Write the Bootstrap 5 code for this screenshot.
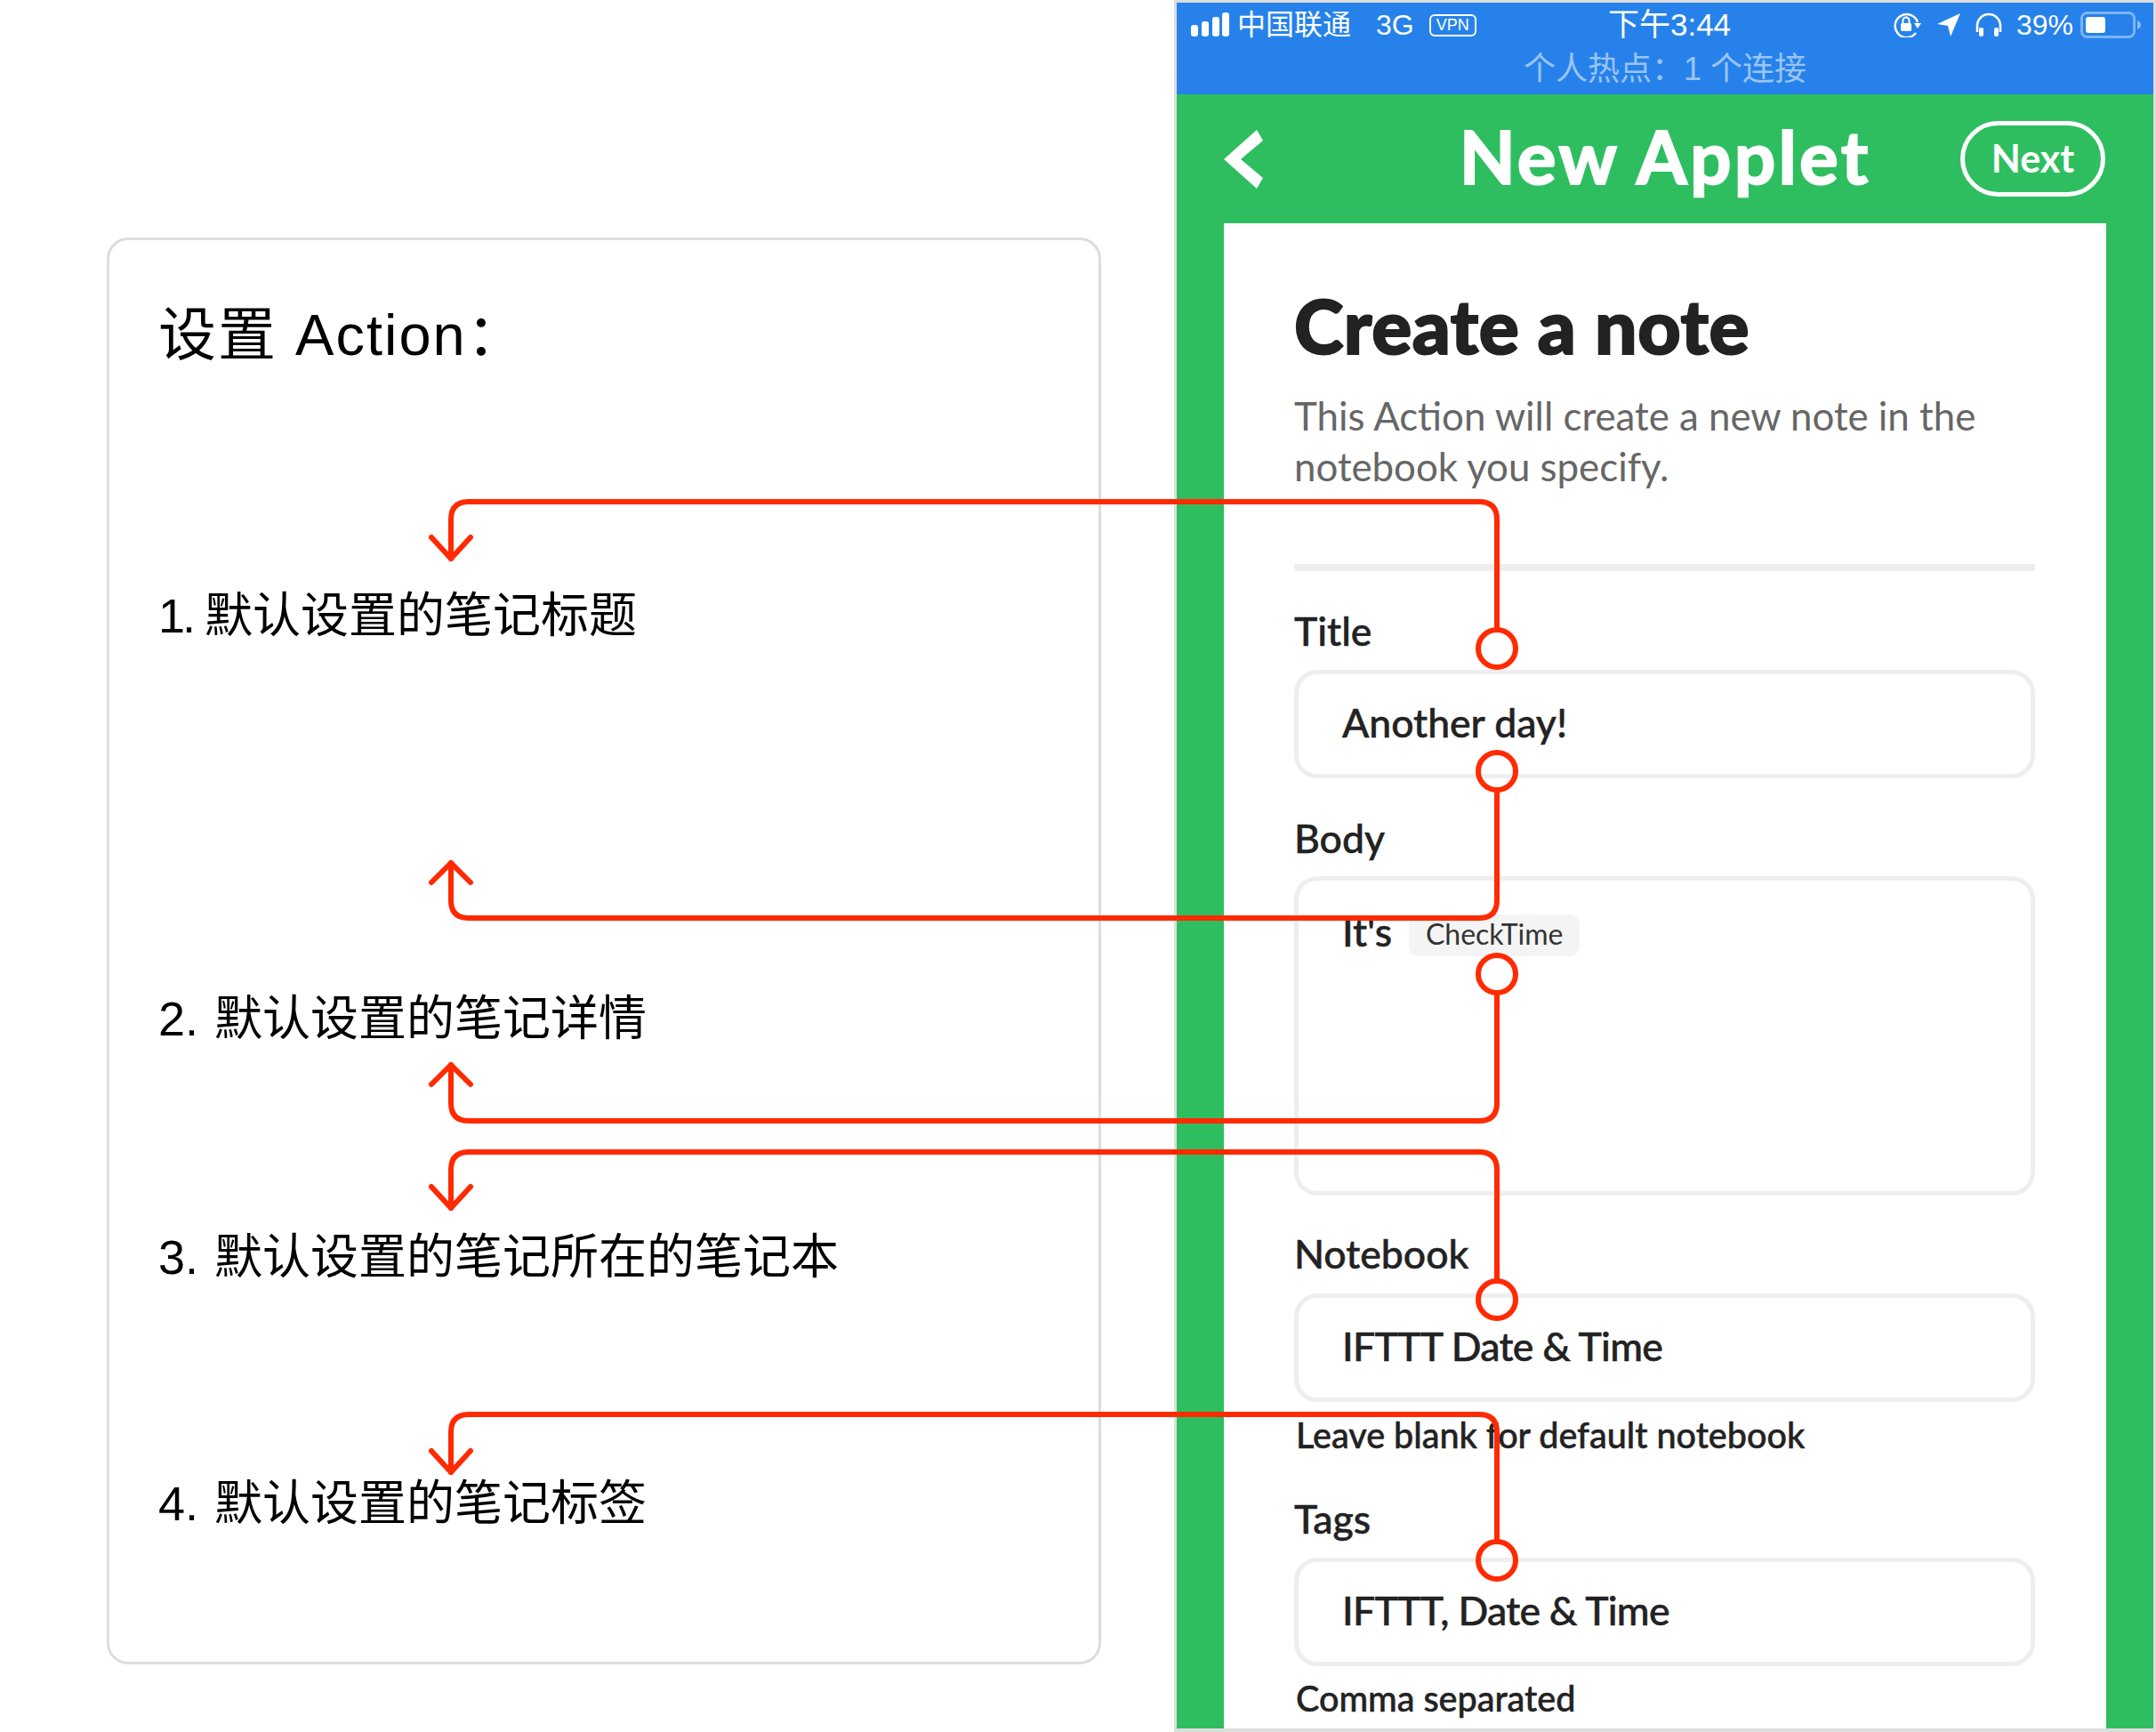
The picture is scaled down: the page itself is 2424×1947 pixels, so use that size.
<!DOCTYPE html>
<html lang="zh">
<head>
  <meta charset="utf-8">
  <title>设置 Action</title>
  <link rel="stylesheet" href="https://cdn.jsdelivr.net/npm/bootstrap@5.3.0/dist/css/bootstrap.min.css">
  <style>
    body { width: 2424px; height: 1947px; overflow: hidden; background: #fff; position: relative; }

    /* left explanation card */
    .side-wrap { width: 1320px; padding: 267px 0 0 120px; }
    .side-card { width: 1118px; height: 1604px; border: 3px solid #ddd; border-radius: 24px; padding: 67px 0 0 55px; font-family: "Liberation Sans", "Noto Sans CJK SC", sans-serif; color: #000; }
    .side-title { font-size: 65px; line-height: 80px; letter-spacing: 2px; }
    .side-row { font-size: 54px; line-height: 70px; }
    .gap-r1 { margin-top: 240px; }
    .gap-r2 { margin-top: 383px; }
    .gap-r3 { margin-top: 198px; }
    .gap-r4 { margin-top: 207px; }
    .num-one { letter-spacing: -3px; margin-right: 13px; }
    .num-rest { margin-right: 3px; }

    /* phone */
    .phone { width: 1104px; height: 1947px; border: 3px solid #ddd; border-bottom-width: 4px; background: #2ebe60; font-family: Lato, "Noto Sans", sans-serif; }
    .status { height: 103px; background: #2682ea; color: #fff; font-family: "Liberation Sans", "Noto Sans CJK SC", sans-serif; }
    .status-top { height: 50px; padding: 0 12px 0 16px; font-size: 32px; }
    .status-side { flex: 1 1 0; }
    .status-time { font-size: 35px; margin-left: 6px; }
    .hotspot { font-size: 36px; line-height: 40px; margin-top: 5px; color: rgba(255,255,255,.55); }
    .vpn-tag { font-size: 18px; line-height: 21px; height: 25px; width: 53px; border: 2px solid #fff; border-radius: 6px; margin-left: 17px; text-align: center; }
    .app-bar { height: 145px; color: #fff; padding-bottom: 6px; }
    .bar-side { flex: 1 1 0; }
    .bar-title { font-size: 82px; font-weight: 700; line-height: 1; letter-spacing: 3.2px; margin-top: -2px; -webkit-text-stroke: 2px #fff; }
    .next-btn { width: 163px; height: 85px; border: 5px solid #fff; border-radius: 43px; color: #fff; background: none; font-size: 43px; font-weight: 700; line-height: 1; margin: 6px 54px 0 0; padding: 0 0 3px; }
    .next-btn:hover { color: #fff; }
    .back-icon { margin: 6px 0 0 53px; }
    .panel { height: 1692px; margin: 0 53px; padding: 75px 80px 0 79px; background: #fff; color: #222; }
    .note-title { font-size: 84px; font-weight: 900; line-height: 80px; margin: 0; color: #222; letter-spacing: .6px; -webkit-text-stroke: 2px #222; }
    .note-desc { font-size: 43.8px; line-height: 57px; margin: 33px 0 0; color: #666; }
    .note-rule { height: 8px; background: #eee; margin-top: 81px; }
    .fld-label { font-size: 44.5px; font-weight: 500; line-height: 50px; margin-bottom: 18px; -webkit-text-stroke: .5px #222; }
    .lb-title { margin-top: 42px; margin-bottom: 19px; }
    .lb-body { margin-top: 42px; }
    .lb-book { margin-top: 40px; margin-bottom: 20px; }
    .lb-tags { margin-top: 47px; margin-bottom: 19px; }
    .fld-box { height: 122px; border: 5px solid #eee; border-radius: 26px; padding: 0 0 3px 49px; font-size: 44.5px; font-weight: 500; color: #222; -webkit-text-stroke: .5px #222; }
    .fld-body { height: 359px; padding: 35px 0 0 49px; }
    .tight-text { letter-spacing: -.7px; }
    .chip { font-size: 32px; font-weight: 400; line-height: 44px; height: 47px; width: 192px; background: #f4f4f4; border-radius: 12px; text-align: center; margin: 3px 0 0 19px; color: #333; -webkit-text-stroke: 0; }
    .its { line-height: 47px; margin-top: -2px; }
    .fld-hint { font-size: 39.5px; font-weight: 500; line-height: 44px; padding-left: 2px; -webkit-text-stroke: .5px #222; }
    .ht-book { margin-top: 15px; }
    .ht-tags { margin-top: 14px; }

    .wires { position: absolute; top: 0; left: 0; pointer-events: none; }
    .wires path, .wires circle { fill: none; stroke: #ff2a00; stroke-width: 6; stroke-linecap: round; stroke-linejoin: round; }
  </style>
</head>
<body>
  <div class="d-flex">
    <div class="side-wrap">
      <div class="side-card">
        <div class="side-title">设置 Action：</div>
        <div class="side-row gap-r1"><span class="num-one">1.</span>默认设置的笔记标题</div>
        <div class="side-row gap-r2"><span class="num-rest">2.</span> 默认设置的笔记详情</div>
        <div class="side-row gap-r3"><span class="num-rest">3.</span> 默认设置的笔记所在的笔记本</div>
        <div class="side-row gap-r4"><span class="num-rest">4.</span> 默认设置的笔记标签</div>
      </div>
    </div>

    <div class="phone d-flex flex-column">
      <div class="status">
        <div class="status-top d-flex align-items-center">
          <div class="status-side d-flex align-items-center">
            <svg width="44" height="28" viewBox="0 0 44 28" class="me-2" fill="#fff">
              <rect x="0" y="14" width="8" height="13" rx="3"/>
              <rect x="12" y="10" width="8" height="17" rx="3"/>
              <rect x="24" y="5" width="8" height="22" rx="3"/>
              <rect x="35" y="0" width="8" height="27" rx="3"/>
            </svg>
            <span>中国联通</span>
            <span class="ms-4 ps-1">3G</span>
            <span class="vpn-tag">VPN</span>
          </div>
          <div class="status-time">下午3:44</div>
          <div class="status-side d-flex align-items-center justify-content-end">
            <svg width="32" height="28" viewBox="0 0 32 28" fill="none" stroke="#fff" stroke-width="2.4">
              <path d="M27 11A13 13 0 1 0 25 23"/>
              <path d="M23 12l8 0-4 6z" fill="#fff" stroke="none"/>
              <rect x="8" y="12" width="12" height="9" rx="1.5" fill="#fff" stroke="none"/>
              <path d="M10.5 12V9a3.5 3.5 0 0 1 7 0v3" stroke-width="2"/>
            </svg>
            <svg width="28" height="28" viewBox="0 0 28 28" class="ms-3" fill="#fff"><path d="M27 1 1 13l12 2 3 12z"/></svg>
            <svg width="30" height="28" viewBox="0 0 30 28" class="ms-3" fill="none" stroke="#fff" stroke-width="2.6">
              <path d="M2 22V15a13 13 0 0 1 26 0v7"/>
              <rect x="4" y="17" width="5" height="10" rx="2" fill="#fff" stroke="none"/>
              <rect x="21" y="17" width="5" height="10" rx="2" fill="#fff" stroke="none"/>
            </svg>
            <span class="ms-3">39%</span>
            <svg width="70" height="30" viewBox="0 0 70 30" class="ms-2">
              <rect x="1.5" y="1.5" width="59" height="27" rx="6" fill="none" stroke="#fff" stroke-opacity=".4" stroke-width="3"/>
              <rect x="6" y="6" width="22" height="18" rx="3" fill="#fff"/>
              <path d="M64 10c3 1 4 3 4 5s-1 4-4 5z" fill="#fff" fill-opacity=".45"/>
            </svg>
          </div>
        </div>
        <div class="hotspot text-center">个人热点：1 个连接</div>
      </div>

      <div class="app-bar d-flex align-items-center">
        <div class="bar-side d-flex">
          <svg class="back-icon" width="44" height="66" viewBox="0 0 44 66"><path d="M37 0 44 12 19 33 44 54 37 66 0 33z" fill="#fff"/></svg>
        </div>
        <div class="bar-title">New Applet</div>
        <div class="bar-side d-flex justify-content-end">
          <button type="button" class="btn next-btn">Next</button>
        </div>
      </div>

      <div class="panel">
        <h1 class="note-title">Create a note</h1>
        <p class="note-desc">This Action will create a new note in the<br>notebook you specify.</p>
        <div class="note-rule"></div>

        <div class="fld-label lb-title">Title</div>
        <div class="fld-box d-flex align-items-center">Another day!</div>

        <div class="fld-label lb-body">Body</div>
        <div class="fld-box fld-body d-flex align-items-start">
          <span class="its">It's</span>
          <span class="chip">CheckTime</span>
        </div>

        <div class="fld-label lb-book">Notebook</div>
        <div class="fld-box d-flex align-items-center"><span class="tight-text">IFTTT Date &amp; Time</span></div>
        <div class="fld-hint ht-book">Leave blank for default notebook</div>

        <div class="fld-label lb-tags">Tags</div>
        <div class="fld-box d-flex align-items-center"><span class="tight-text">IFTTT, Date &amp; Time</span></div>
        <div class="fld-hint ht-tags">Comma separated</div>
      </div>
    </div>
  </div>

  <svg class="wires" width="2424" height="1947" viewBox="0 0 2424 1947">
    <path d="M507 628V584Q507 564 527 564H1663Q1683 564 1683 584V707"/>
    <path d="M485 604 507 628 529 604"/>
    <circle cx="1683" cy="729" r="21"/>

    <path d="M1683 888V1012Q1683 1032 1663 1032H527Q507 1032 507 1012V970"/>
    <path d="M485 992 507 970 529 992"/>
    <circle cx="1683" cy="867" r="21"/>

    <path d="M1683 1116V1240Q1683 1260 1663 1260H527Q507 1260 507 1240V1197"/>
    <path d="M485 1219 507 1197 529 1219"/>
    <circle cx="1683" cy="1095" r="21"/>

    <path d="M507 1358V1315Q507 1295 527 1295H1663Q1683 1295 1683 1315V1440"/>
    <path d="M485 1334 507 1358 529 1334"/>
    <circle cx="1683" cy="1461" r="21"/>

    <path d="M507 1655V1610Q507 1590 527 1590H1663Q1683 1590 1683 1610V1733"/>
    <path d="M485 1631 507 1655 529 1631"/>
    <circle cx="1683" cy="1754" r="21"/>
  </svg>
</body>
</html>
